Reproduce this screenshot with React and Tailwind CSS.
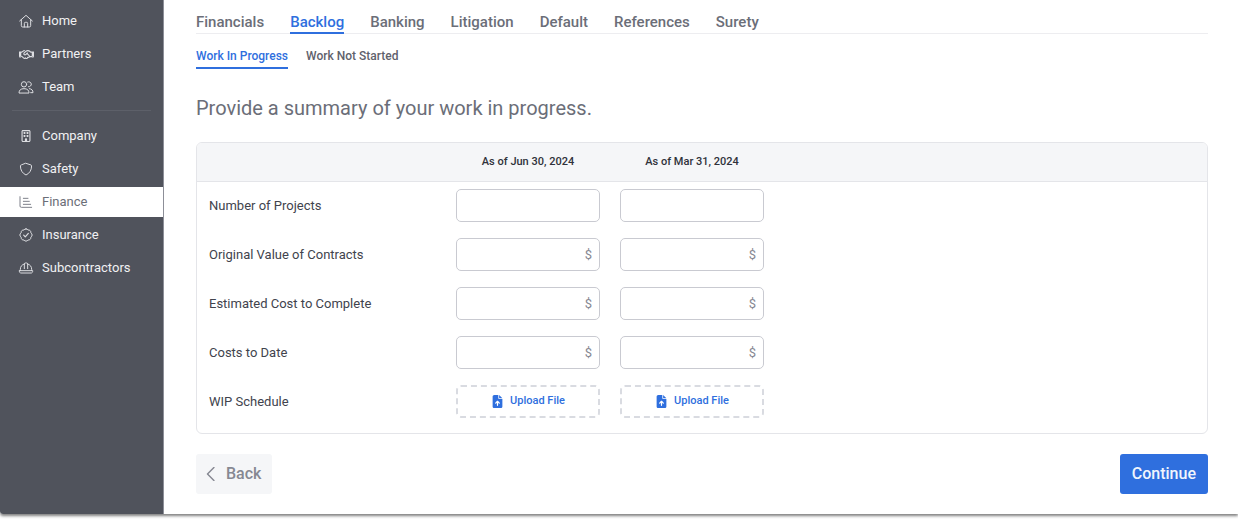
import React, { useState } from 'react';
import clsx from 'clsx';
import { FaFileArrowUp, FaRegBuilding, FaRegHandshake } from 'react-icons/fa6';

const Icon = ({ children, className = 'h-4 w-4' }) => (
    <svg
        viewBox="0 0 24 24"
        fill="none"
        stroke="currentColor"
        strokeWidth="1.5"
        strokeLinecap="round"
        strokeLinejoin="round"
        className={className}
        aria-hidden="true"
    >
        {children}
    </svg>
);

const HomeIcon = () => (
    <Icon>
        <path d="M2.5 12 12 3.5l9.5 8.500M5 10v9a2 2 0 0 0 2 2h10a2 2 0 0 0 2-2v-9" />
        <path d="M9.500 21v-5.500A1.500 1.500 0 0 1 11 14h2a1.500 1.500 0 0 1 1.500 1.500V21" />
    </Icon>
);

const TeamIcon = () => (
    <Icon>
        <circle cx="9" cy="8" r="4" />
        <path d="M1.500 20.500c0-3.700 2.500-6 7.500-6s7.500 2.300 7.500 6zM14.500 4.500a3.800 3.800 0 1 1 1.200 7.200M17 14.500c3.800.2 5.500 2.500 5.500 6H19" />
    </Icon>
);

const SafetyIcon = () => (
    <Icon>
        <path d="M12 3.500 19.500 6c.6.200.9.700.9 1.300C20.400 13.500 17.500 18.500 12 21 6.500 18.500 3.600 13.500 3.600 7.300c0-.6.3-1.100.9-1.300z" />
    </Icon>
);

const FinanceIcon = () => (
    <Icon>
        <path d="M3 4v14a2 2 0 0 0 2 2h15.500M8 6.500h7M8 11h9M8 15.500h11" />
    </Icon>
);

const InsuranceIcon = () => (
    <Icon>
        <path d="M12 2.800c1.300 0 2.300.7 3 1.700 1.200-.2 2.400.1 3.300 1 .9.900 1.200 2.100 1 3.300 1 .8 1.900 1.900 1.900 3.200s-.8 2.400-1.900 3.200c.2 1.200-.1 2.400-1 3.300-.9.900-2.100 1.200-3.300 1-.7 1-1.700 1.700-3 1.700s-2.300-.7-3-1.700c-1.200.2-2.400-.1-3.300-1-.9-.9-1.200-2.100-1-3.300-1-.8-1.900-1.900-1.900-3.200s.8-2.400 1.900-3.200c-.2-1.200.1-2.400 1-3.300.9-.9 2.100-1.200 3.300-1 .7-1 1.700-1.700 3-1.700z" />
        <path d="m8.500 12.300 2.400 2.400 4.600-5" strokeWidth="1.800" />
    </Icon>
);

const HardHatIcon = () => (
    <Icon>
        <path d="M3.500 16v-2a8.500 8.500 0 0 1 6-8.100M20.500 16v-2a8.500 8.500 0 0 0-6-8.100M9.500 13V6c0-.8.6-1.500 1.500-1.500h2c.9 0 1.500.7 1.500 1.500v7" />
        <path d="M2 16h20v1c0 1.200-1 2.500-2 2.500H4c-1 0-2-1.300-2-2.500z" />
    </Icon>
);

const mainNav = [
    { label: 'Home', icon: <HomeIcon /> },
    { label: 'Partners', icon: <FaRegHandshake size={15} /> },
    { label: 'Team', icon: <TeamIcon /> },
];

const companyNav = [
    { label: 'Company', icon: <FaRegBuilding size={12} /> },
    { label: 'Safety', icon: <SafetyIcon /> },
    { label: 'Finance', icon: <FinanceIcon />, active: true },
    { label: 'Insurance', icon: <InsuranceIcon /> },
    { label: 'Subcontractors', icon: <HardHatIcon /> },
];

const tabs = ['Financials', 'Backlog', 'Banking', 'Litigation', 'Default', 'References', 'Surety'];
const subTabs = ['Work In Progress', 'Work Not Started'];
const periods = ['As of Jun 30, 2024', 'As of Mar 31, 2024'];

const rows = [
    { label: 'Number of Projects' },
    { label: 'Original Value of Contracts', money: true },
    { label: 'Estimated Cost to Complete', money: true },
    { label: 'Costs to Date', money: true },
];

const NavList = ({ items }) => (
    <ul className="flex flex-col gap-[3px]">
        {items.map(({ label, icon, active }) => (
            <li key={label}>
                <a
                    href="#"
                    className={clsx(
                        'flex h-[30px] items-center gap-2 pl-[18px] text-[13px]',
                        active ? 'bg-white text-[#6b6e78]' : 'text-[#f1f1f3]'
                    )}
                >
                    <span className={clsx('flex w-4 justify-center', active ? 'text-[#7f818b]' : 'text-[#dcdde1]')}>
                        {icon}
                    </span>
                    {label}
                </a>
            </li>
        ))}
    </ul>
);

const Field = ({ label, money }) => (
    <div className="relative">
        <input
            type="text"
            aria-label={label}
            className="block h-[33px] w-full rounded-[5px] border border-[#c9cad1] bg-white pl-2 pr-6 text-[13px] outline-none focus:border-[#2f6fde]"
        />
        {money && (
            <span className="pointer-events-none absolute inset-y-0 right-2 flex items-center text-[13px] text-[#868892]">$</span>
        )}
    </div>
);

const App = () => {
    const [tab, setTab] = useState('Backlog');
    const [subTab, setSubTab] = useState('Work In Progress');

    return (
        <div className="overflow-hidden bg-white pb-[7px]">
            <div className="flex overflow-hidden rounded-bl-[3px] bg-white font-[Roboto,sans-serif] shadow-[0_2px_3px_rgba(0,0,0,0.5)]">
                <aside className="w-[164px] shrink-0 border-r border-[#8d8f98] bg-[#50535c] pt-[6px]">
                    <nav>
                        <NavList items={mainNav} />
                        <hr className="mx-3 mt-2 mb-[10px] border-[#5d6069]" />
                        <NavList items={companyNav} />
                    </nav>
                </aside>

                <main className="min-w-0 flex-1 pt-[11px] pr-[30px] pb-5 pl-8">
                    <div className="flex gap-[26px] border-b border-[#ededf0]">
                        {tabs.map((name) => (
                            <button
                                key={name}
                                type="button"
                                onClick={() => setTab(name)}
                                className={clsx(
                                    '-mb-px h-[23px] border-b-2 text-[15px] leading-5 font-medium',
                                    tab === name ? 'border-[#2f6fde] text-[#2f6fde]' : 'border-transparent text-[#6b6e78]'
                                )}
                            >
                                {name}
                            </button>
                        ))}
                    </div>

                    <div className="mt-[10px] flex gap-[18px]">
                        {subTabs.map((name) => (
                            <button
                                key={name}
                                type="button"
                                onClick={() => setSubTab(name)}
                                className={clsx(
                                    'h-[25px] border-b-2 text-xs font-medium',
                                    subTab === name ? 'border-[#2f6fde] text-[#2f6fde]' : 'border-transparent text-[#5f626c]'
                                )}
                            >
                                {name}
                            </button>
                        ))}
                    </div>

                    <h1 className="mt-[25px] text-xl leading-7 text-[#6b6e78]">Provide a summary of your work in progress.</h1>

                    <div className="mt-5 overflow-hidden rounded-md border border-[#e4e5e9] pb-[7px]">
                        <table className="w-full table-fixed">
                            <colgroup>
                                <col className="w-[249px]" />
                                <col className="w-[164px]" />
                                <col className="w-[164px]" />
                                <col />
                            </colgroup>
                            <thead>
                                <tr className="h-[38px] border-b border-[#e4e5e9] bg-[#f5f6f8] text-[11px] text-[#30323b]">
                                    <td />
                                    {periods.map((period) => (
                                        <th key={period} scope="col" className="font-medium">{period}</th>
                                    ))}
                                    <td />
                                </tr>
                            </thead>
                            <tbody className="text-[13px] text-[#41434d]">
                                {rows.map(({ label, money }) => (
                                    <tr key={label} className="h-[49px]">
                                        <th scope="row" className="pl-3 text-left font-normal">{label}</th>
                                        {periods.map((period) => (
                                            <td key={period} className="px-[10px]">
                                                <Field label={`${label}, ${period}`} money={money} />
                                            </td>
                                        ))}
                                        <td />
                                    </tr>
                                ))}
                                <tr className="h-[49px]">
                                    <th scope="row" className="pl-3 text-left font-normal">WIP Schedule</th>
                                    {periods.map((period) => (
                                        <td key={period} className="px-[10px]">
                                            <button
                                                type="button"
                                                className="flex h-[33px] w-full items-center justify-center gap-1.5 rounded-[5px] border-2 border-dashed border-[#d9dbe1] text-[11px] font-medium text-[#2f6fde]"
                                            >
                                                <FaFileArrowUp size={13} />
                                                Upload File
                                            </button>
                                        </td>
                                    ))}
                                    <td />
                                </tr>
                            </tbody>
                        </table>
                    </div>

                    <div className="mt-5 flex items-center justify-between">
                        <button
                            type="button"
                            className="flex h-10 items-center gap-2 rounded-[3px] bg-[#f5f6f8] pr-[11px] pl-2 text-base font-medium text-[#868892]"
                        >
                            <Icon className="h-[14px] w-[14px]">
                                <path d="M17 1 6 12l11 11" strokeWidth="2.500" />
                            </Icon>
                            Back
                        </button>
                        <button type="button" className="h-10 rounded-[3px] bg-[#2f6fde] px-3 text-base font-medium text-[#f0f5fd]">
                            Continue
                        </button>
                    </div>
                </main>
            </div>
        </div>
    );
};

export default App;
